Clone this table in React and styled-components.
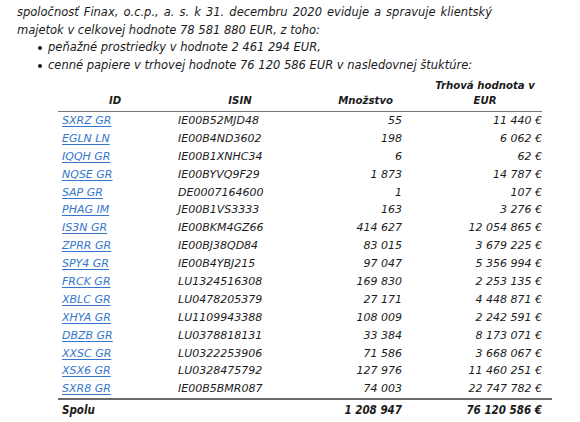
import React from "react";
import styled, { createGlobalStyle } from "styled-components";

const Global = createGlobalStyle`
  html, body { margin: 0; padding: 0; background: #fff; }
  body {
    font-family: "DejaVu Sans", sans-serif;
    color: #1b1b1b;
    width: 580px;
    height: 422px;
    overflow: hidden;
  }
`;

const Page = styled.div`
  padding: 3px 0 0 17px;
  font-style: italic;
  font-size: 11.5px;
`;

const Intro = styled.div`
  width: 475px;
  line-height: 18px;
`;

const JustLine = styled.div`
  text-align: justify;
  text-align-last: justify;
  white-space: nowrap;
`;

const Plain = styled.div``;

const Bullets = styled.ul`
  list-style: none;
  margin: 0;
  padding: 0 0 0 31px;
  line-height: 17.5px;
`;

const Bullet = styled.li`
  position: relative;
  &::before {
    content: "";
    position: absolute;
    left: -10px;
    top: 7px;
    width: 4px;
    height: 4px;
    border-radius: 50%;
    background: #1b1b1b;
  }
`;

const Table = styled.div`
  margin: 8px 0 0 41px;
  width: 484px;
  display: grid;
  grid-template-columns: 114px 136px 94px 140px;
  font-size: 11px;
`;

const HeadCell = styled.div`
  font-family: "DejaVu Sans Condensed", "DejaVu Sans", sans-serif;
  font-weight: bold;
  font-size: 11.3px;
  display: flex;
  align-items: flex-end;
  justify-content: ${(p) => p.$justify || "center"};
  text-align: center;
  line-height: 15px;
  padding: ${(p) => p.$pad || "0"};
  padding-bottom: 3px;
  height: 30px;
  box-sizing: border-box;
  border-bottom: 1px solid #777;
  white-space: nowrap;
`;

const Cell = styled.div`
  height: 17.9px;
  line-height: 17.9px;
  white-space: nowrap;
  text-align: ${(p) => p.$align || "left"};
  padding: ${(p) => p.$pad || "0"};
`;

const Ticker = styled.a`
  color: #3576cc;
  text-decoration: underline;
  text-underline-offset: 2px;
  padding-left: 4px;
`;

const Rule = styled.div`
  grid-column: 1 / -1;
  height: 2px;
  background: #6a6a6a;
  width: 494px;
`;

const TotalCell = styled(Cell)`
  font-family: "DejaVu Sans Condensed", "DejaVu Sans", sans-serif;
  font-weight: bold;
  font-size: 11.5px;
  height: 21px;
  line-height: 21px;
`;

const rows = [
  ["SXRZ GR", "IE00B52MJD48", "55", "11 440 €"],
  ["EGLN LN", "IE00B4ND3602", "198", "6 062 €"],
  ["IQQH GR", "IE00B1XNHC34", "6", "62 €"],
  ["NQSE GR", "IE00BYVQ9F29", "1 873", "14 787 €"],
  ["SAP GR", "DE0007164600", "1", "107 €"],
  ["PHAG IM", "JE00B1VS3333", "163", "3 276 €"],
  ["IS3N GR", "IE00BKM4GZ66", "414 627", "12 054 865 €"],
  ["ZPRR GR", "IE00BJ38QD84", "83 015", "3 679 225 €"],
  ["SPY4 GR", "IE00B4YBJ215", "97 047", "5 356 994 €"],
  ["FRCK GR", "LU1324516308", "169 830", "2 253 135 €"],
  ["XBLC GR", "LU0478205379", "27 171", "4 448 871 €"],
  ["XHYA GR", "LU1109943388", "108 009", "2 242 591 €"],
  ["DBZB GR", "LU0378818131", "33 384", "8 173 071 €"],
  ["XXSC GR", "LU0322253906", "71 586", "3 668 067 €"],
  ["XSX6 GR", "LU0328475792", "127 976", "11 460 251 €"],
  ["SXR8 GR", "IE00B5BMR087", "74 003", "22 747 782 €"],
];

export default function App() {
  return (
    <>
      <Global />
      <Page>
        <Intro>
          <JustLine>
            spoločnosť Finax, o.c.p., a. s. k 31. decembru 2020 eviduje a spravuje klientský
          </JustLine>
          <Plain>majetok v celkovej hodnote 78 581 880 EUR, z toho:</Plain>
        </Intro>
        <Bullets>
          <Bullet>peňažné prostriedky v hodnote 2 461 294 EUR,</Bullet>
          <Bullet>cenné papiere v trhovej hodnote 76 120 586 EUR v nasledovnej štuktúre:</Bullet>
        </Bullets>
        <Table>
          <HeadCell>ID</HeadCell>
          <HeadCell>ISIN</HeadCell>
          <HeadCell $justify="flex-end" $pad="0 9px 0 0">Množstvo</HeadCell>
          <HeadCell $pad="0 0 0 26px">
            Trhová hodnota v<br />EUR
          </HeadCell>
          {rows.map((r) => (
            <React.Fragment key={r[0]}>
              <Cell>
                <Ticker href="#">{r[0]}</Ticker>
              </Cell>
              <Cell $pad="0 0 0 6px">{r[1]}</Cell>
              <Cell $align="right">{r[2]}</Cell>
              <Cell $align="right">{r[3]}</Cell>
            </React.Fragment>
          ))}
          <Rule />
          <TotalCell $pad="0 0 0 4px">Spolu</TotalCell>
          <TotalCell />
          <TotalCell $align="right">1 208 947</TotalCell>
          <TotalCell $align="right">76 120 586 €</TotalCell>
        </Table>
      </Page>
    </>
  );
}
